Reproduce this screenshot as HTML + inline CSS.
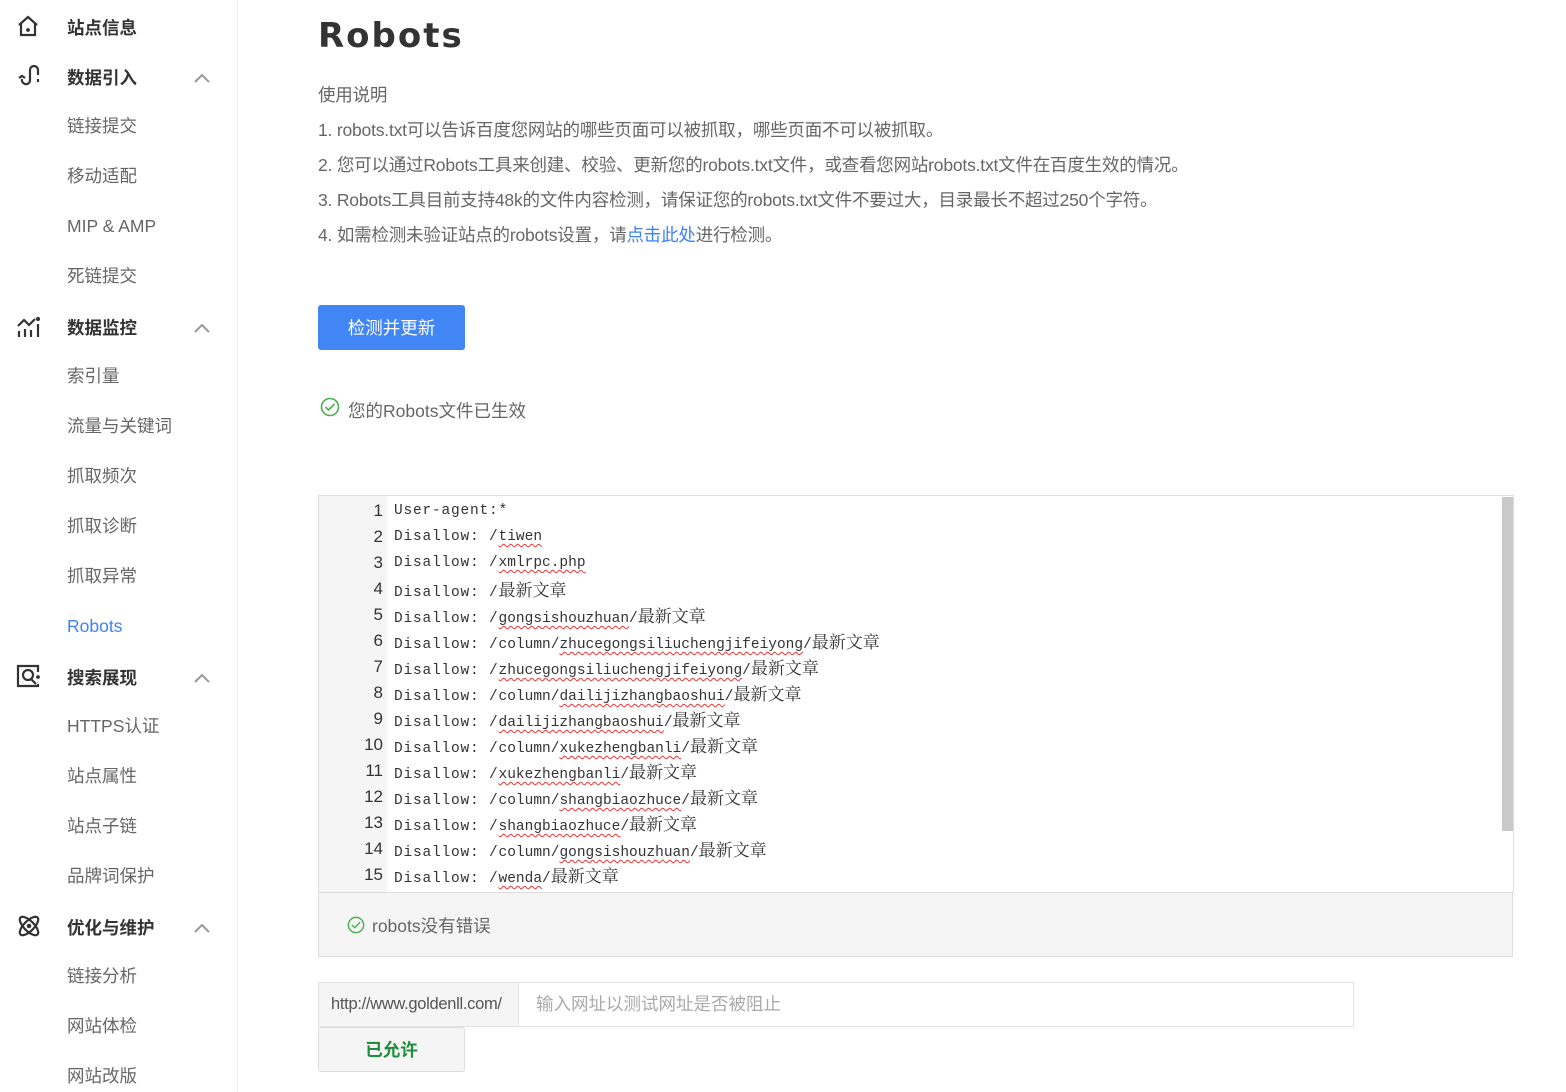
<!DOCTYPE html>
<html><head><meta charset="utf-8"><style>
*{margin:0;padding:0;box-sizing:border-box}
body{width:1566px;height:1092px;position:relative;background:#fff;font-family:"Liberation Sans","Noto Sans CJK SC",sans-serif;overflow:hidden;color:#666}
.a{position:absolute;white-space:nowrap}
#side{position:absolute;left:0;top:0;width:238px;height:1092px;border-right:1px solid #ececec}
.m{position:absolute;left:67px;font-size:17.5px;font-weight:bold;color:#333;line-height:20px}
.s{position:absolute;left:67px;font-size:17.5px;color:#666;line-height:20px}
.ic{position:absolute;left:16px}
.chev{position:absolute;left:193px}
.p{position:absolute;left:318px;font-size:17.5px;color:#666;line-height:20px;letter-spacing:-0.2px}
#code{position:absolute;left:318px;top:495px;width:1196px;height:398px;border:1px solid #ddd;border-bottom:none;overflow:hidden;background:#fff}
#gut{position:absolute;left:0;top:0;width:68px;height:397px;background:#f5f5f5}
.ln{position:absolute;left:0;width:64px;font-family:"Liberation Sans",sans-serif;font-size:17px;color:#333;text-align:right;line-height:20px}
.cl{position:absolute;left:75px;font-family:"Liberation Mono",monospace;font-size:14.5px;color:#333;line-height:20px;white-space:nowrap}
.cl i{font-style:normal;letter-spacing:0.8px}
.cl b{font-weight:normal;font-family:"Noto Serif CJK SC","Noto Sans CJK SC",serif;font-size:17px;line-height:20px}
.u{text-decoration:underline wavy #e33;text-decoration-thickness:1px;text-underline-offset:3px}
</style></head><body>
<div id="side">
<svg class="ic" style="top:14px" width="24" height="24" viewBox="0 0 24 24" fill="none" stroke="#333" stroke-width="2.2"><path d="M3 11L12 3l9 8"/><path d="M5 9v12h14V9"/><circle cx="12" cy="16" r="0.8" fill="#333"/></svg>
<div class="m" style="top:18px">站点信息</div>
<svg class="ic" style="top:63px" width="26" height="26" viewBox="0 0 26 26" fill="none" stroke="#333" stroke-width="2.2"><path d="M6 16a4 4 0 0 0 8 2V7a4 4 0 0 1 8 0v5"/><path d="M3 15l3-2 3 2"/><path d="M22 16v3"/></svg>
<div class="m" style="top:68px">数据引入</div>
<svg class="chev" style="top:72px" width="18" height="12" viewBox="0 0 18 12" fill="none" stroke="#999" stroke-width="2"><path d="M2 10l7-7 7 7"/></svg>
<div class="s" style="top:116px">链接提交</div>
<div class="s" style="top:166px">移动适配</div>
<div class="s" style="top:216px">MIP &amp; AMP</div>
<div class="s" style="top:266px">死链提交</div>
<svg class="ic" style="top:313px" width="26" height="26" viewBox="0 0 26 26" fill="none" stroke="#333" stroke-width="2.2"><path d="M2 13l6-6 5 5 6-6"/><path d="M3 18v6M9 16v8M15 17v7M22 11v13"/><circle cx="22" cy="6" r="1" fill="#333"/></svg>
<div class="m" style="top:318px">数据监控</div>
<svg class="chev" style="top:322px" width="18" height="12" viewBox="0 0 18 12" fill="none" stroke="#999" stroke-width="2"><path d="M2 10l7-7 7 7"/></svg>
<div class="s" style="top:366px">索引量</div>
<div class="s" style="top:416px">流量与关键词</div>
<div class="s" style="top:466px">抓取频次</div>
<div class="s" style="top:516px">抓取诊断</div>
<div class="s" style="top:566px">抓取异常</div>
<div class="s" style="top:616px;color:#3c82f6">Robots</div>
<svg class="ic" style="top:664px" width="26" height="26" viewBox="0 0 26 26" fill="none" stroke="#333" stroke-width="2.2"><path d="M22 8V2H2v20h20v-2"/><circle cx="12" cy="11" r="5"/><path d="M15 15l5 5"/><circle cx="22" cy="13" r="0.8" fill="#333"/></svg>
<div class="m" style="top:668px">搜索展现</div>
<svg class="chev" style="top:672px" width="18" height="12" viewBox="0 0 18 12" fill="none" stroke="#999" stroke-width="2"><path d="M2 10l7-7 7 7"/></svg>
<div class="s" style="top:716px">HTTPS认证</div>
<div class="s" style="top:766px">站点属性</div>
<div class="s" style="top:816px">站点子链</div>
<div class="s" style="top:866px">品牌词保护</div>
<svg class="ic" style="top:913px" width="26" height="26" viewBox="0 0 26 26" fill="none" stroke="#333" stroke-width="2.2"><ellipse cx="13" cy="13" rx="12" ry="5" transform="rotate(45 13 13)"/><ellipse cx="13" cy="13" rx="12" ry="5" transform="rotate(-45 13 13)"/><circle cx="13" cy="13" r="1.2" fill="#333"/></svg>
<div class="m" style="top:918px">优化与维护</div>
<svg class="chev" style="top:922px" width="18" height="12" viewBox="0 0 18 12" fill="none" stroke="#999" stroke-width="2"><path d="M2 10l7-7 7 7"/></svg>
<div class="s" style="top:966px">链接分析</div>
<div class="s" style="top:1016px">网站体检</div>
<div class="s" style="top:1066px">网站改版</div>
</div>

<div class="a" style="left:318px;top:15px;font-size:34px;font-weight:bold;color:#333;letter-spacing:2px;font-family:'DejaVu Sans','Liberation Sans',sans-serif;line-height:42px">Robots</div>
<div class="p" style="top:85px">使用说明</div>
<div class="p" style="top:120px">1. robots.txt可以告诉百度您网站的哪些页面可以被抓取，哪些页面不可以被抓取。</div>
<div class="p" style="top:155px">2. 您可以通过Robots工具来创建、校验、更新您的robots.txt文件，或查看您网站robots.txt文件在百度生效的情况。</div>
<div class="p" style="top:190px">3. Robots工具目前支持48k的文件内容检测，请保证您的robots.txt文件不要过大，目录最长不超过250个字符。</div>
<div class="p" style="top:225px">4. 如需检测未验证站点的robots设置，请<span style="color:#3c82f6">点击此处</span>进行检测。</div>

<div class="a" style="left:318px;top:305px;width:147px;height:45px;background:#4285f4;border-radius:3px;color:#fff;font-size:17.5px;text-align:center;line-height:47px">检测并更新</div>

<svg class="a" style="left:320px;top:397px" width="20" height="20" viewBox="0 0 20 20" fill="none" stroke="#4caf50" stroke-width="1.6"><circle cx="10" cy="10" r="8.5"/><path d="M5.5 10l3 3 6-6"/></svg>
<div class="a" style="left:348px;top:401px;font-size:17.5px;color:#666;line-height:20px">您的Robots文件已生效</div>

<div id="code">
<div id="gut"></div>
<div style="position:absolute;left:1183px;top:1px;width:12px;height:334px;background:#c9c9c9"></div>
<div class="ln" style="top:5px">1</div><div class="cl" style="top:5px"><i>User-agent:*</i></div>
<div class="ln" style="top:31px">2</div><div class="cl" style="top:31px"><i>Disallow: /</i><span class="u">tiwen</span></div>
<div class="ln" style="top:57px">3</div><div class="cl" style="top:57px"><i>Disallow: /</i><span class="u">xmlrpc.php</span></div>
<div class="ln" style="top:83px">4</div><div class="cl" style="top:83px"><i>Disallow: /</i><b>最新文章</b></div>
<div class="ln" style="top:109px">5</div><div class="cl" style="top:109px"><i>Disallow: /</i><span class="u">gongsishouzhuan</span>/<b>最新文章</b></div>
<div class="ln" style="top:135px">6</div><div class="cl" style="top:135px"><i>Disallow: /</i>column/<span class="u">zhucegongsiliuchengjifeiyong</span>/<b>最新文章</b></div>
<div class="ln" style="top:161px">7</div><div class="cl" style="top:161px"><i>Disallow: /</i><span class="u">zhucegongsiliuchengjifeiyong</span>/<b>最新文章</b></div>
<div class="ln" style="top:187px">8</div><div class="cl" style="top:187px"><i>Disallow: /</i>column/<span class="u">dailijizhangbaoshui</span>/<b>最新文章</b></div>
<div class="ln" style="top:213px">9</div><div class="cl" style="top:213px"><i>Disallow: /</i><span class="u">dailijizhangbaoshui</span>/<b>最新文章</b></div>
<div class="ln" style="top:239px">10</div><div class="cl" style="top:239px"><i>Disallow: /</i>column/<span class="u">xukezhengbanli</span>/<b>最新文章</b></div>
<div class="ln" style="top:265px">11</div><div class="cl" style="top:265px"><i>Disallow: /</i><span class="u">xukezhengbanli</span>/<b>最新文章</b></div>
<div class="ln" style="top:291px">12</div><div class="cl" style="top:291px"><i>Disallow: /</i>column/<span class="u">shangbiaozhuce</span>/<b>最新文章</b></div>
<div class="ln" style="top:317px">13</div><div class="cl" style="top:317px"><i>Disallow: /</i><span class="u">shangbiaozhuce</span>/<b>最新文章</b></div>
<div class="ln" style="top:343px">14</div><div class="cl" style="top:343px"><i>Disallow: /</i>column/<span class="u">gongsishouzhuan</span>/<b>最新文章</b></div>
<div class="ln" style="top:369px">15</div><div class="cl" style="top:369px"><i>Disallow: /</i><span class="u">wenda</span>/<b>最新文章</b></div>
</div>
<div class="a" style="left:318px;top:892px;width:1195px;height:65px;background:#f5f5f5;border:1px solid #ddd"></div>
<svg class="a" style="left:347px;top:916px" width="18" height="18" viewBox="0 0 20 20" fill="none" stroke="#4caf50" stroke-width="1.6"><circle cx="10" cy="10" r="8.5"/><path d="M5.5 10l3 3 6-6"/></svg>
<div class="a" style="left:372px;top:916px;font-size:17.5px;color:#666;line-height:20px">robots没有错误</div>

<div class="a" style="left:318px;top:982px;width:1036px;height:45px;border:1px solid #e3e3e3;background:#fff"></div>
<div class="a" style="left:318px;top:982px;width:201px;height:45px;border:1px solid #e3e3e3;background:#f5f5f5;font-size:16.5px;color:#555;line-height:43px;padding-left:12px;letter-spacing:-0.3px">http://www.goldenll.com/</div>
<div class="a" style="left:536px;top:994px;font-size:17.5px;color:#aaa;line-height:20px">输入网址以测试网址是否被阻止</div>
<div class="a" style="left:318px;top:1027px;width:147px;height:45px;border:1px solid #ddd;border-radius:3px;background:#f5f5f5;color:#1e8e3e;font-weight:bold;font-size:17.5px;text-align:center;line-height:45px">已允许</div>
</body></html>
